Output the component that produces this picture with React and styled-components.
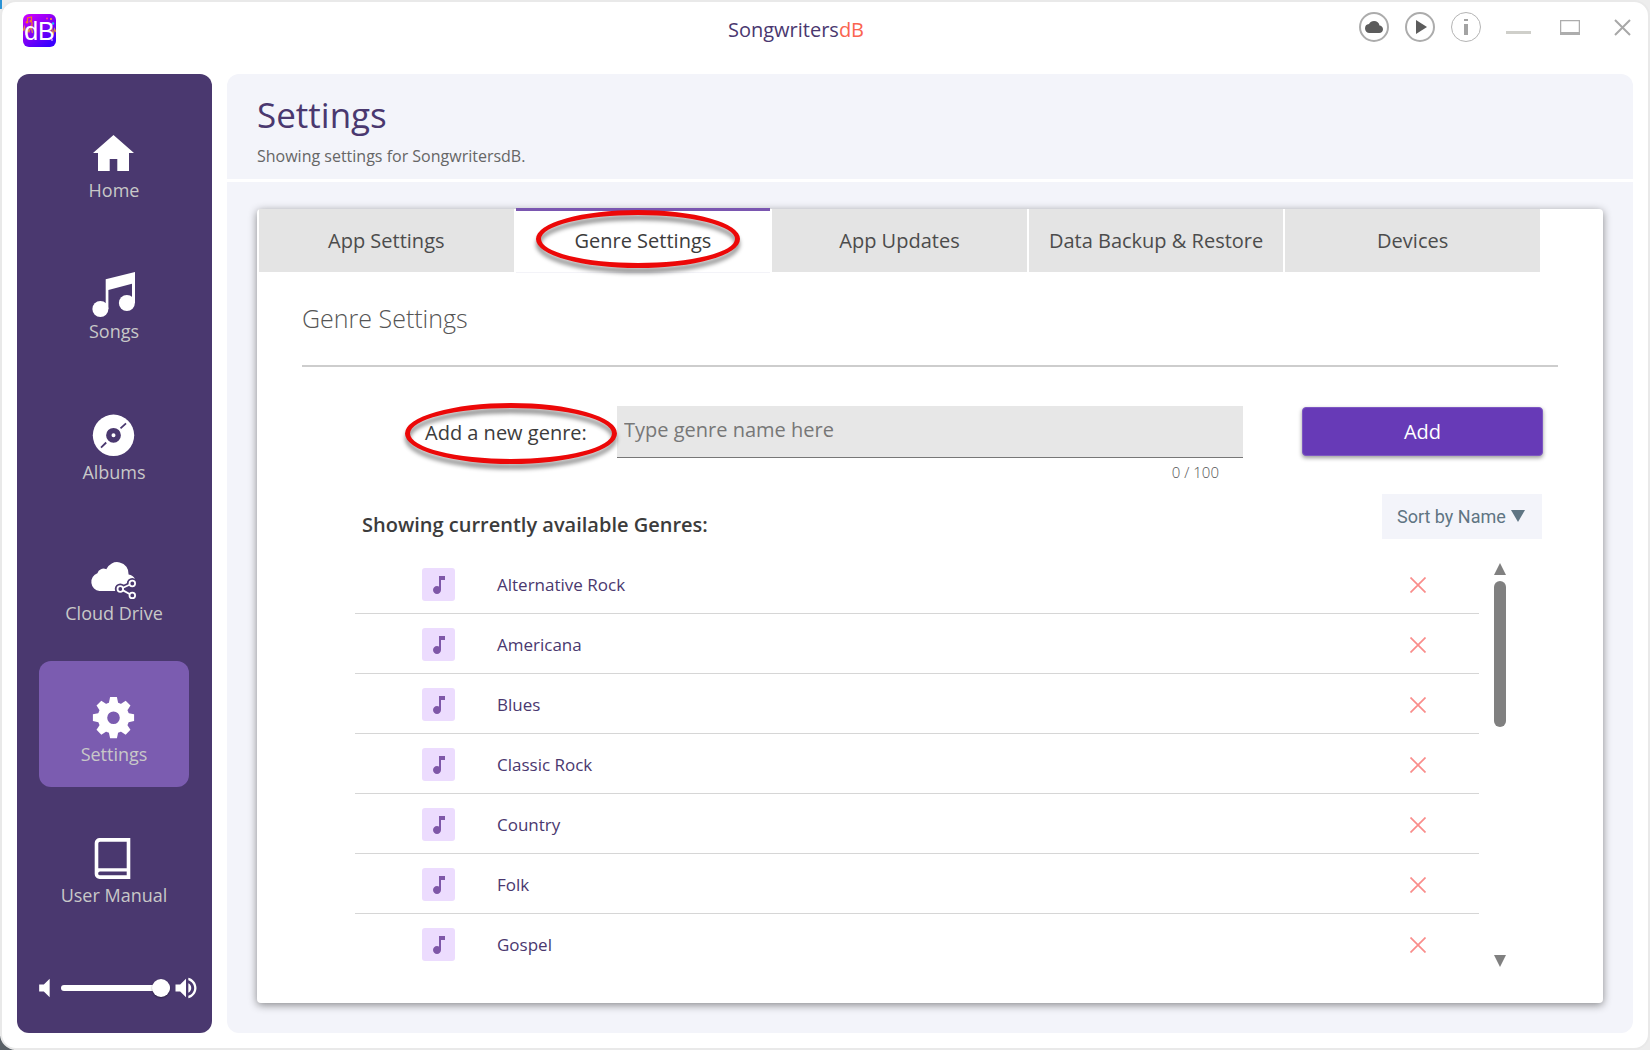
import React, { useState } from 'react';
import styled, { createGlobalStyle } from 'styled-components';
import {
  MdCloud,
  MdMusicNote,
  MdPlayArrow,
  MdVolumeMute,
  MdVolumeUp,
} from 'react-icons/md';

const GlobalStyle = createGlobalStyle`
  * {
    box-sizing: border-box;
  }

  body {
    margin: 0;
    font-family: 'Open Sans', 'Noto Sans', sans-serif;
    color: #444;
    background: #ededed;
  }

  button, input, select {
    font-family: inherit;
    margin: 0;
  }

  h1, h2, h3, p, ul {
    margin: 0;
    padding: 0;
  }

  svg {
    display: block;
  }
`;

const Desktop = styled.div`
  display: flex;
  min-height: 100vh;
  background:
    linear-gradient(#2a93d5, #2a93d5) 0 0 / 2px 9px no-repeat,
    linear-gradient(#596066, #596066) 0 100% / 14px 14px no-repeat,
    #ededed;
`;

const Window = styled.div`
  flex: 1;
  min-width: 0;
  display: flex;
  flex-direction: column;
  border: 2px solid #e9e9e9;
  border-radius: 16px;
  background: #fff;
`;

const TitleBar = styled.header`
  display: grid;
  grid-template-columns: 228px 1fr 286px;
  height: 72px;
`;

const Logo = styled.div`
  padding: 12px 0 0 21px;
`;

const AppName = styled.div`
  padding-top: 14px;
  font-size: 20px;
  line-height: 28px;
  text-align: center;
  color: #4a386f;

  span {
    color: #fa6450;
  }
`;

const Controls = styled.div`
  display: flex;
  align-items: flex-start;
  justify-content: flex-end;
  gap: 22px;
  padding: 10px 11px 0 0;
`;

const ControlGroup = styled.div`
  display: flex;
  gap: ${({ $gap }) => $gap}px;
`;

const ControlButton = styled.button`
  display: flex;
  align-items: center;
  justify-content: center;
  width: 30px;
  height: 30px;
  padding: 0;
  border: 0;
  background: none;
  color: #5c5c5c;
`;

const RoundButton = styled(ControlButton)`
  border: ${({ $thin }) => ($thin ? '1px solid #b4b4b4' : '2px solid #acacac')};
  border-radius: 50%;
`;

const Main = styled.div`
  flex: 1;
  display: flex;
  gap: 15px;
  padding: 0 15px;
  margin-bottom: 15px;
`;

const Sidebar = styled.nav`
  flex: none;
  display: flex;
  flex-direction: column;
  width: 195px;
  padding: 23px 0 33px;
  border-radius: 12px;
  background: #4a386f;
`;

const NavList = styled.ul`
  display: flex;
  flex-direction: column;
  gap: 15px;
  padding-left: 22px;
  list-style: none;
`;

const NavLink = styled.a`
  display: flex;
  flex-direction: column;
  align-items: center;
  gap: 1px;
  width: 150px;
  height: 126px;
  padding-top: 32px;
  border-radius: 12px;
  background: ${({ $active }) => ($active ? '#7b5cb0' : 'none')};
  color: #c8c8c8;
  font-size: 18px;
  line-height: 24px;
  text-decoration: none;
  white-space: nowrap;
`;

const Volume = styled.div`
  display: flex;
  align-items: center;
  gap: 2px;
  height: 24px;
  margin-top: auto;
  padding: 0 12px 0 14px;
  color: #fff;

  svg {
    flex: none;
  }
`;

const VolumeSlider = styled.input.attrs({ type: 'range' })`
  flex: 1;
  min-width: 0;
  height: 18px;
  appearance: none;
  background: none;

  &::-webkit-slider-runnable-track {
    height: 6px;
    border-radius: 3px;
    background: #fff;
  }

  &::-webkit-slider-thumb {
    appearance: none;
    width: 18px;
    height: 18px;
    margin-top: -6px;
    border-radius: 50%;
    background: #fff;
    box-shadow: 0 1px 2px rgba(0, 0, 0, 0.4);
  }
`;

const Page = styled.main`
  flex: 1;
  min-width: 0;
  display: flex;
  flex-direction: column;
  gap: 3px;
`;

const PageHeader = styled.div`
  height: 105px;
  padding: 19px 30px 0;
  border-radius: 12px 12px 0 0;
  background: #f3f4fa;

  h1 {
    font-size: 35px;
    font-weight: 400;
    line-height: 44px;
    color: #4a386f;
  }

  p {
    margin-top: 7px;
    font-size: 16px;
    line-height: 24px;
    color: #666;
  }
`;

const PageBody = styled.div`
  flex: 1;
  display: flex;
  padding: 27px 30px 30px;
  border-radius: 0 0 12px 12px;
  background: #f3f4fa;
`;

const Card = styled.div`
  flex: 1;
  min-width: 0;
  border-radius: 4px;
  background: #fff;
  box-shadow: 0 2px 8px rgba(0, 0, 0, 0.45);
`;

const Tabs = styled.div`
  display: flex;
  gap: 2px;
  height: 63px;
  padding: 0 63px 0 2px;
`;

const Tab = styled.button`
  position: relative;
  flex: 1 1 0;
  min-width: 0;
  padding: 0;
  border: 0;
  background: #e4e4e4;
  color: #4c4c4c;
  font-size: 20px;
  line-height: 28px;
  white-space: nowrap;

  &[aria-selected='true'] {
    background: #fff;
    box-shadow: inset 0 2px #7a56b0, 0 -1px #7a56b0, 0 1px #f3f3f8;
    color: #3c3c3c;
  }
`;

// red pen ring drawn around a piece of text
const Ring = styled.span`
  position: absolute;
  inset: ${({ $inset }) => $inset};
  border: 5px solid #ec0808;
  border-radius: 50%;
  filter: drop-shadow(0 5px 2px rgba(0, 0, 0, 0.45));
  pointer-events: none;
`;

const Section = styled.section`
  padding: 28px 45px 29px;
`;

const SectionTitle = styled.h2`
  padding-bottom: 29px;
  border-bottom: 2px solid #cdcdcd;
  font-size: 25px;
  font-weight: 300;
  line-height: 36px;
  color: #555;
`;

const AddForm = styled.form`
  display: flex;
  align-items: flex-start;
  padding: 39px 15px 0 123px;
`;

const FieldLabel = styled.label`
  position: relative;
  flex: none;
  width: 192px;
  font-size: 20px;
  line-height: 54px;
  color: #3c3c3c;
`;

const Field = styled.div`
  flex: 1;
  min-width: 0;
  margin-right: 59px;
`;

const TextInput = styled.input`
  display: block;
  width: 100%;
  height: 52px;
  padding: 0 7px 4px;
  border: 0;
  border-bottom: 1px solid #777;
  border-radius: 0;
  background: #e7e7e7;
  font-size: 20px;

  &::placeholder {
    color: #777;
    opacity: 1;
  }
`;

const Counter = styled.div`
  padding: 4px 24px 0 0;
  font-size: 15px;
  font-weight: 300;
  line-height: 20px;
  text-align: right;
  color: #555;
`;

const AddButton = styled.button`
  flex: none;
  width: 241px;
  height: 49px;
  margin-top: 1px;
  border: 1px solid #7d57c2;
  border-radius: 4px;
  background: #673ab7;
  box-shadow: 0 2px 4px rgba(0, 0, 0, 0.4);
  color: #fff;
  font-size: 20px;
`;

const ListHeader = styled.div`
  display: flex;
  align-items: flex-end;
  justify-content: space-between;
  padding: 12px 16px 0 60px;

  h3 {
    font-size: 20px;
    font-weight: 600;
    line-height: 28px;
    color: #3c3c3c;
  }
`;

const SortBox = styled.div`
  position: relative;

  svg {
    position: absolute;
    top: 16px;
    right: 17px;
    pointer-events: none;
  }
`;

const SortSelect = styled.select`
  display: block;
  width: 160px;
  height: 45px;
  padding: 0 15px;
  border: 0;
  border-radius: 0;
  appearance: none;
  background: #f3f4fa;
  color: #5f7583;
  font-family: Roboto, sans-serif;
  font-size: 18px;
`;

const ListArea = styled.div`
  display: flex;
  gap: 15px;
  padding: 15px 52px 0 53px;
`;

const GenreList = styled.ul`
  flex: 1;
  min-width: 0;
  list-style: none;
`;

const GenreRow = styled.li`
  display: flex;
  align-items: center;
  height: 60px;
  padding: 2px 49px 0 67px;
  border-bottom: 1px solid #d6d6d6;
  font-size: 17px;
  color: #4a386f;

  &:last-child {
    border-bottom-color: transparent;
  }
`;

const GenreIcon = styled.span`
  display: flex;
  align-items: center;
  justify-content: center;
  width: 33px;
  height: 33px;
  margin-right: 42px;
  border-radius: 3px;
  background: #ecdcfe;
  color: #7e57a8;
`;

const DeleteButton = styled.button`
  margin-left: auto;
  padding: 4px;
  border: 0;
  background: none;
`;

const ScrollBar = styled.div`
  display: flex;
  flex-direction: column;
  width: 12px;
  padding: 9px 0 7px;
`;

const ScrollThumb = styled.div`
  height: 146px;
  margin: 6px 0 auto;
  border-radius: 6px;
  background: #808080;
`;

const HomeIcon = () => (
  <path d="M23.5 6L44 24H39V42H27.3V30H19.7V42H8V24H3Z" />
);

const SongsIcon = () => (
  <>
    <path d="M15.7 9.3L45 2V33H42V13.8L18.4 20V39H15.7Z" />
    <circle cx="10.4" cy="39" r="8" />
    <circle cx="36.9" cy="33" r="8" />
  </>
);

const AlbumsIcon = () => (
  <>
    <circle cx="23.5" cy="24.3" r="20.7" />
    <circle cx="23.5" cy="24.3" r="4.7" fill="none" stroke="#4a386f" strokeWidth="5.4" />
    <path
      d="M36 12.3L30.5 17.4M11 36.7L16.2 31.5"
      stroke="#4a386f"
      strokeWidth="1.8"
    />
  </>
);

const CloudIcon = () => (
  <>
    <path d="M9.5 39A9.2 9.2 0 0 1 7.4 21.2A6.3 6.3 0 0 1 16.3 17.3A11.6 11.6 0 0 1 38.6 22.6Q43 23.5 45 27L36 39Z" />
    <g fill="#4a386f" stroke="#4a386f" strokeWidth="5">
      <path d="M42.3 31.5L30.3 37L42.3 43.4" />
      <circle cx="42.3" cy="31.5" r="3" />
      <circle cx="30.3" cy="37" r="3" />
    </g>
    <g fill="none" stroke="#fff" strokeWidth="1.8">
      <path d="M39.6 32.8L33 35.8M33 38.4L39.6 42" />
      <circle cx="42.3" cy="31.5" r="2.8" />
      <circle cx="30.3" cy="37" r="2.8" />
      <circle cx="42.3" cy="43.4" r="2.8" />
    </g>
  </>
);

const GearIcon = () => (
  <g transform="translate(23.5 24.7)">
    <circle r="11" fill="none" stroke="#fff" strokeWidth="9.4" />
    {[0, 45, 90, 135, 180, 225, 270, 315].map(angle => (
      <path
        key={angle}
        d="M-4.8 -14L-3.4 -20.6H3.4L4.8 -14Z"
        transform={`rotate(${angle})`}
      />
    ))}
  </g>
);

const BookIcon = () => (
  <path
    fillRule="evenodd"
    d="M9.7 4H40.3V45H9.7A5 5 0 0 1 4.7 40V9A5 5 0 0 1 9.7 4ZM10 7.7A1.7 1.7 0 0 0 8.3 9.4V34.2H36.7V7.7ZM10 37.6A1.8 1.8 0 0 0 10 41.3H36.7V37.6Z"
  />
);

const NAV_ITEMS = [
  { label: 'Home', Icon: HomeIcon },
  { label: 'Songs', Icon: SongsIcon },
  { label: 'Albums', Icon: AlbumsIcon },
  { label: 'Cloud Drive', Icon: CloudIcon },
  { label: 'Settings', Icon: GearIcon },
  { label: 'User Manual', Icon: BookIcon },
];

const TABS = [
  'App Settings',
  'Genre Settings',
  'App Updates',
  'Data Backup & Restore',
  'Devices',
];

const GENRES = [
  'Alternative Rock',
  'Americana',
  'Blues',
  'Classic Rock',
  'Country',
  'Folk',
  'Gospel',
];

const LogoMark = () => (
  <svg width="33" height="33" viewBox="0 0 33 33" aria-label="SongwritersdB logo">
    <defs>
      <linearGradient id="logo-bg" x1="0" y1="0" x2="0.7" y2="1">
        <stop offset="0" stopColor="#d400ff" />
        <stop offset="0.5" stopColor="#8a00f5" />
        <stop offset="1" stopColor="#3a00ff" />
      </linearGradient>
    </defs>
    <rect width="33" height="33" rx="6" fill="url(#logo-bg)" />
    <path
      d="M0 17L1.5 13L3 21L4.5 15L6 18L8 12L9.5 19M27 17L28.5 13L30 21L31.5 15L33 18"
      fill="none"
      stroke="#e08a4a"
      strokeWidth="1.2"
    />
    <path
      d="M4.5 8V4L8.5 3V7M9 12V8"
      fill="none"
      stroke="#f5742c"
      strokeWidth="1.2"
    />
    <circle cx="4" cy="8.2" r="1.3" fill="#f5742c" />
    <circle cx="7.8" cy="7.2" r="1.3" fill="#f5742c" />
    <circle cx="24" cy="4.5" r="1" fill="#ff3d9a" />
    <circle cx="28" cy="5" r="1" fill="#ff9b2e" />
    <circle cx="30" cy="9.5" r="1.2" fill="#16c7f5" />
    <circle cx="29" cy="26" r="0.9" fill="#c9a5ff" />
    <text
      x="16.5"
      y="26"
      textAnchor="middle"
      fontFamily="'Liberation Sans Narrow', 'Liberation Sans', sans-serif"
      fontSize="25"
      fill="#fff"
    >
      dB
    </text>
  </svg>
);

const App = () => {
  const [genres, setGenres] = useState(GENRES);
  const [name, setName] = useState('');
  const [tab, setTab] = useState('Genre Settings');
  const [volume, setVolume] = useState(100);

  const onAdd = event => {
    event.preventDefault();
    if (name.trim()) {
      setGenres([...genres, name.trim()].sort());
      setName('');
    }
  };

  const onDelete = genre => () => {
    setGenres(genres.filter(item => item !== genre));
  };

  return (
    <Desktop>
      <GlobalStyle />
      <Window>
        <TitleBar>
          <Logo>
            <LogoMark />
          </Logo>
          <AppName>
            Songwriters<span>dB</span>
          </AppName>
          <Controls>
            <ControlGroup $gap={16}>
              <RoundButton aria-label="Cloud">
                <MdCloud size={18} />
              </RoundButton>
              <RoundButton aria-label="Play">
                <MdPlayArrow size={24} />
              </RoundButton>
              <RoundButton $thin aria-label="Info">
                <svg width="4" height="16" fill="#a3a3a3">
                  <rect width="4" height="2" />
                  <rect y="5" width="4" height="11" />
                </svg>
              </RoundButton>
            </ControlGroup>
            <ControlGroup $gap={22}>
              <ControlButton aria-label="Minimize">
                <svg width="26" height="16">
                  <rect x="1" y="12" width="25" height="3" fill="#cfcfca" />
                </svg>
              </ControlButton>
              <ControlButton aria-label="Maximize">
                <svg width="20" height="15" fill="none" stroke="#adadad">
                  <path d="M0.5 15V0.5H19.5V15" strokeWidth="1.5" />
                  <path d="M0 13.5H20" strokeWidth="3" />
                </svg>
              </ControlButton>
              <ControlButton aria-label="Close">
                <svg width="17" height="17" stroke="#a8a8a8" strokeWidth="2">
                  <path d="M1 1L16 16M16 1L1 16" />
                </svg>
              </ControlButton>
            </ControlGroup>
          </Controls>
        </TitleBar>

        <Main>
          <Sidebar>
            <NavList>
              {NAV_ITEMS.map(({ label, Icon }) => (
                <li key={label}>
                  <NavLink href="#" $active={label === 'Settings'}>
                    <svg width="48" height="48" viewBox="0 0 48 48" fill="#fff">
                      <Icon />
                    </svg>
                    {label}
                  </NavLink>
                </li>
              ))}
            </NavList>
            <Volume>
              <MdVolumeMute size={28} />
              <VolumeSlider
                aria-label="Volume"
                min="0"
                max="100"
                value={volume}
                onChange={e => setVolume(e.target.value)}
              />
              <MdVolumeUp size={28} />
            </Volume>
          </Sidebar>

          <Page>
            <PageHeader>
              <h1>Settings</h1>
              <p>Showing settings for SongwritersdB.</p>
            </PageHeader>
            <PageBody>
              <Card>
                <Tabs role="tablist">
                  {TABS.map(item => (
                    <Tab
                      key={item}
                      role="tab"
                      aria-selected={item === tab}
                      onClick={() => setTab(item)}
                    >
                      {item}
                      {item === 'Genre Settings' && (
                        <Ring $inset="1px 30px 4px 20px" />
                      )}
                    </Tab>
                  ))}
                </Tabs>
                <Section>
                  <SectionTitle>Genre Settings</SectionTitle>
                  <AddForm onSubmit={onAdd}>
                    <FieldLabel htmlFor="genre-name">
                      Add a new genre:
                      <Ring $inset="-3px 0 -4px -20px" />
                    </FieldLabel>
                    <Field>
                      <TextInput
                        id="genre-name"
                        type="text"
                        maxLength={100}
                        placeholder="Type genre name here"
                        value={name}
                        onChange={e => setName(e.target.value)}
                      />
                      <Counter>{name.length} / 100</Counter>
                    </Field>
                    <AddButton type="submit">Add</AddButton>
                  </AddForm>

                  <ListHeader>
                    <h3>Showing currently available Genres:</h3>
                    <SortBox>
                      <SortSelect aria-label="Sort genres">
                        <option>Sort by Name</option>
                        <option>Sort by Date</option>
                      </SortSelect>
                      <svg width="14" height="12" fill="#5f7583">
                        <path d="M0 0H14L7 12Z" />
                      </svg>
                    </SortBox>
                  </ListHeader>

                  <ListArea>
                    <GenreList>
                      {genres.map(genre => (
                        <GenreRow key={genre}>
                          <GenreIcon>
                            <MdMusicNote size={24} />
                          </GenreIcon>
                          {genre}
                          <DeleteButton
                            aria-label={`Delete ${genre}`}
                            onClick={onDelete(genre)}
                          >
                            <svg width="16" height="16" stroke="#f98d8b" strokeWidth="1.7">
                              <path d="M0.5 0.5L15.5 15.5M15.5 0.5L0.5 15.5" />
                            </svg>
                          </DeleteButton>
                        </GenreRow>
                      ))}
                    </GenreList>
                    <ScrollBar>
                      <svg width="12" height="12" fill="#808080">
                        <path d="M6 0L12 12H0Z" />
                      </svg>
                      <ScrollThumb />
                      <svg width="12" height="12" fill="#808080">
                        <path d="M0 0H12L6 12Z" />
                      </svg>
                    </ScrollBar>
                  </ListArea>
                </Section>
              </Card>
            </PageBody>
          </Page>
        </Main>
      </Window>
    </Desktop>
  );
};

export default App;
